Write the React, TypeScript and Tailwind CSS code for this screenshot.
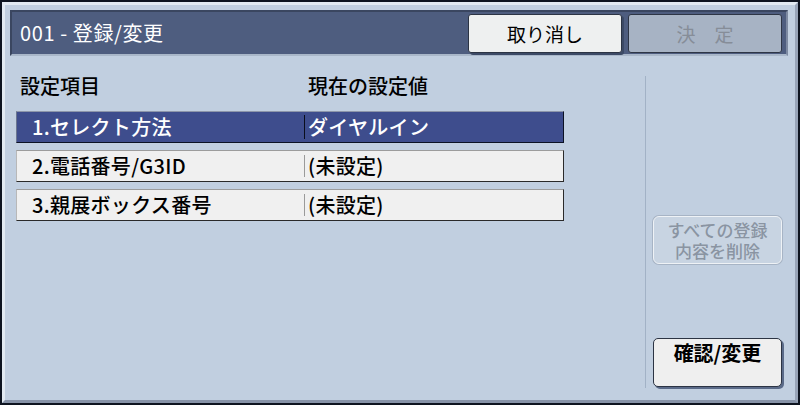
import React from 'react'

const rows = [
  { label: '1.セレクト方法', value: 'ダイヤルイン', selected: true },
  { label: '2.電話番号/G3ID', value: '(未設定)', selected: false },
  { label: '3.親展ボックス番号', value: '(未設定)', selected: false },
]

export default function App() {
  return (
    <div className="w-[800px] h-[405px] bg-[#0e1420] p-[2px] font-['Noto_Sans_CJK_JP','Noto_Sans',sans-serif] select-none">
      <div className="h-full flex flex-col bg-[#c1cfe0] border-[3px] border-t-[#e2eaf2] border-l-[#e2eaf2] border-b-[#8793a8] border-r-[#98a4b8]">
        {/* Title bar */}
        <div className="mt-[5px] ml-[5px] mr-[7px] h-[46px] flex items-center bg-[#4e5d7f] border-2 border-t-[#3a4660] border-l-[#3a4660] border-b-[#a9b7c9] border-r-[#7d8aa2] pr-[4px]">
          <span className="ml-[8px] text-white text-[20px] leading-none tracking-[0.6px] whitespace-pre">001 - 登録/変更</span>
          <div className="ml-auto flex gap-[6px]">
            <button className="w-[154px] h-[39px] rounded-[3px] bg-[#eef0f0] border border-[#2c3444] shadow-[2px_2px_0_#3c4a66] text-[19px] leading-none text-black">
              取り消し
            </button>
            <button className="w-[154px] h-[39px] rounded-[3px] bg-[#a7b3c4] border border-[#2e3646] text-[19px] leading-none text-[#868d98]">
              決　定
            </button>
          </div>
        </div>

        {/* Body */}
        <div className="flex flex-1">
          <div className="w-[640px] pl-[11px]">
            <div className="mt-[18px] flex text-[20px] leading-[24px] text-black font-medium">
              <span className="w-[292px] pl-[4px]">設定項目</span>
              <span>現在の設定値</span>
            </div>
            <div className="mt-[13px] flex flex-col gap-[7px] w-[548px]">
              {rows.map(r => (
                <div
                  key={r.label}
                  className={
                    r.selected
                      ? 'h-[32px] flex items-center bg-[#3e4d8d] border border-t-[#8d96aa] border-l-[#6b7690] border-b-[#0c1224] border-r-[#0c1224] text-white'
                      : 'h-[32px] flex items-center bg-[#f0f0f0] border border-t-[#9c9c9c] border-l-[#b8b8b8] border-b-[#2a2a2a] border-r-[#2a2a2a] text-black'
                  }
                >
                  <span className="w-[287px] pl-[15px] text-[20px] leading-none font-medium tracking-[0.3px]">{r.label}</span>
                  <span className={r.selected ? 'w-px h-[24px] bg-[#0a0e1c]' : 'w-px h-[22px] bg-[#9a9a9a]'} />
                  <span className="pl-[3px] text-[20px] leading-none font-medium tracking-[0.3px]">{r.value}</span>
                </div>
              ))}
            </div>
          </div>

          <div className="mt-[20px] w-px h-[312px] bg-[#a2b2c6]" />

          <div className="ml-[7px] flex flex-col">
            <button className="mt-[160px] w-[129px] h-[48px] rounded-[6px] bg-[#c8d4e2] border border-[#eef2f6] shadow-[0_0_0_1px_#a7b4c5] flex flex-col items-center justify-center text-[17px] leading-[21px] text-[#8a94a2] font-medium">
              <span className="block h-[21px]">すべての登録</span>
              <span className="block h-[21px]">内容を削除</span>
            </button>
            <button className="mt-[74px] w-[129px] h-[49px] rounded-[5px] bg-[#efefef] border border-[#2c3444] shadow-[2px_2px_0_#5a6a88] flex justify-center pt-[3px] text-[20px] leading-[22px] text-black font-bold">
              確認/変更
            </button>
          </div>
        </div>
      </div>
    </div>
  )
}
